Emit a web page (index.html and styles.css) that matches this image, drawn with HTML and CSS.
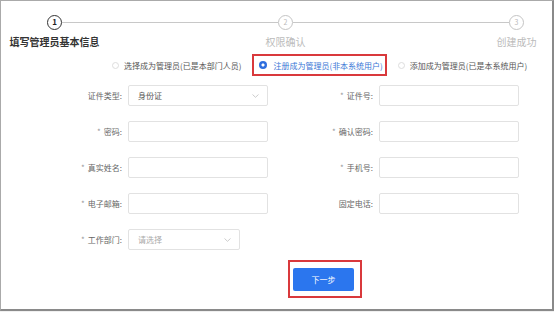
FILE: index.html
```html
<!DOCTYPE html>
<html lang="zh-CN">
<head>
  <meta charset="UTF-8">
  <meta name="viewport" content="width=device-width, initial-scale=1.0">
  <title>填写管理员基本信息</title>
  <link rel="stylesheet" href="styles.css">
</head>
<body>
  <div class="panel">
    <div class="steps">
      <div class="step active">
        <span class="step-dot">1</span>
        <span class="step-name">填写管理员基本信息</span>
      </div>
      <div class="step-line"></div>
      <div class="step">
        <span class="step-dot">2</span>
        <span class="step-name">权限确认</span>
      </div>
      <div class="step-line"></div>
      <div class="step">
        <span class="step-dot">3</span>
        <span class="step-name">创建成功</span>
      </div>
    </div>

    <div class="role-options">
      <label class="radio"><span class="radio-dot"></span>选择成为管理员(已是本部门人员)</label>
      <label class="radio checked mark"><span class="radio-dot"></span>注册成为管理员(非本系统用户)</label>
      <label class="radio"><span class="radio-dot"></span>添加成为管理员(已是本系统用户)</label>
    </div>

    <form class="admin-form">
      <div class="form-row">
        <div class="field">
          <span class="field-label">证件类型:</span>
          <div class="input select"><span>身份证</span>
            <svg width="7" height="4" viewBox="0 0 7 4"><path d="M0.5 0.5 L3.5 3.3 L6.5 0.5" fill="none" stroke="#c0c0c0" stroke-width="0.8"/></svg>
          </div>
        </div>
        <div class="field">
          <span class="field-label"><i>*</i>证件号:</span>
          <div class="input"></div>
        </div>
      </div>
      <div class="form-row">
        <div class="field">
          <span class="field-label"><i>*</i>密码:</span>
          <div class="input"></div>
        </div>
        <div class="field">
          <span class="field-label"><i>*</i>确认密码:</span>
          <div class="input"></div>
        </div>
      </div>
      <div class="form-row">
        <div class="field">
          <span class="field-label"><i>*</i>真实姓名:</span>
          <div class="input"></div>
        </div>
        <div class="field">
          <span class="field-label"><i>*</i>手机号:</span>
          <div class="input"></div>
        </div>
      </div>
      <div class="form-row">
        <div class="field">
          <span class="field-label"><i>*</i>电子邮箱:</span>
          <div class="input"></div>
        </div>
        <div class="field">
          <span class="field-label">固定电话:</span>
          <div class="input"></div>
        </div>
      </div>
      <div class="form-row">
        <div class="field">
          <span class="field-label"><i>*</i>工作部门:</span>
          <div class="input select short"><span class="placeholder">请选择</span>
            <svg width="7" height="4" viewBox="0 0 7 4"><path d="M0.5 0.5 L3.5 3.3 L6.5 0.5" fill="none" stroke="#c0c0c0" stroke-width="0.8"/></svg>
          </div>
        </div>
      </div>
    </form>

    <div class="actions">
      <span class="mark btn-mark"><button class="next-btn" type="button">下一步</button></span>
    </div>
  </div>
</body>
</html>
```

FILE: styles.css
```css
* { box-sizing: border-box; }
body { margin: 0; background: #f0f0f0; font-family: "Noto Sans CJK SC", "Noto Sans", sans-serif; font-size: 8px; color: #555; }
.panel { width: 554px; height: 311px; background: #fff; border-top: 1px solid #aaa; border-left: 1px solid #aaa; border-right: 2px solid #8a8a8a; border-bottom: 2px solid #8a8a8a; }

/* steps */
.steps { display: flex; padding: 14px 28px 0 46px; }
.step { width: 15px; display: flex; flex-direction: column; align-items: center; }
.step-dot { width: 15px; height: 15px; border-radius: 50%; border: 1px solid #c4c4c4; color: #bbb; font-size: 7px; line-height: 13px; text-align: center; }
.step-name { margin-top: 6px; font-size: 10px; line-height: 12px; color: #bbb; white-space: nowrap; }
.step.active .step-dot { border: 1.5px solid #333; color: #222; line-height: 12px; font-size: 8px; font-weight: bold; }
.step.active .step-name { color: #333; font-weight: bold; }
.step-line { flex: 1; height: 1px; background: #c8c8c8; margin-top: 7px; }

/* role radios */
.role-options { display: flex; align-items: center; height: 22px; margin-top: 6px; padding-left: 111px; }
.radio { display: flex; align-items: center; height: 22px; white-space: nowrap; color: #555; }
.radio-dot { width: 7px; height: 7px; border-radius: 50%; border: 1px solid #ddd; margin-right: 5px; }
.radio.checked { color: #3a76d6; }
.radio.checked .radio-dot { width: 8px; height: 8px; border: none; margin-right: 6px; background: radial-gradient(circle, #fff 1.3px, #2f6ede 1.8px); }
.mark { border: 2px solid #d9393c; }
.role-options .mark { margin: 0 11px; padding: 0 2px 0 5px; }

/* form */
.admin-form { margin-top: 9px; padding-left: 59px; display: flex; flex-direction: column; gap: 15px; }
.form-row { display: flex; gap: 43px; }
.field { display: flex; align-items: center; width: 208px; }
.field-label { width: 62px; margin-right: 6px; text-align: right; color: #666; white-space: nowrap; }
.field-label i { font-style: normal; color: #999; margin-right: 3px; }
.input { width: 140px; height: 21px; border: 1px solid #e2e2e2; border-radius: 2px; background: #fff; }
.select { display: flex; align-items: center; justify-content: space-between; padding: 0 8px 0 9px; color: #555; }
.select.short { width: 112px; }
.placeholder { color: #aaa; }

/* actions */
.actions { margin-top: 10px; padding-left: 287px; }
.btn-mark { display: inline-block; padding: 6px 6px 5px 3px; }
.next-btn { display: block; width: 61px; height: 23px; border: none; border-radius: 2px; background: #2b76ee; color: #fff; font-family: inherit; font-size: 8px; cursor: pointer; }
```
